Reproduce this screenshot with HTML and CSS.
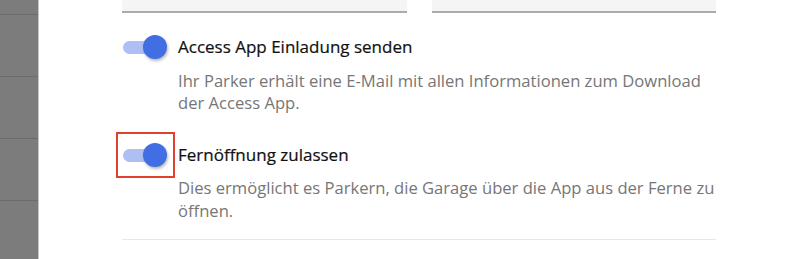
FILE: index.html
```html
<!DOCTYPE html>
<html lang="de">
<head>
<meta charset="utf-8">
<title>Einstellungen</title>
<link rel="stylesheet" href="styles.css">
</head>
<body>
<div class="page">
  <aside class="backdrop">
    <div class="backdrop-row first"></div>
    <div class="backdrop-row"></div>
    <div class="backdrop-row"></div>
    <div class="backdrop-row"></div>
    <div class="backdrop-row"></div>
  </aside>
  <main class="panel">
    <div class="fields">
      <div class="field"></div>
      <div class="field"></div>
    </div>
    <div class="settings">
      <div class="setting">
        <div class="switch on">
          <span class="track"></span>
          <span class="thumb"></span>
        </div>
        <div class="setting-text">
          <div class="setting-title">Access App Einladung senden</div>
          <p class="setting-desc">Ihr Parker erhält eine E-Mail mit allen Informationen zum Download der Access App.</p>
        </div>
      </div>
      <div class="setting">
        <div class="switch on">
          <span class="track"></span>
          <span class="thumb"></span>
          <span class="highlight"></span>
        </div>
        <div class="setting-text">
          <div class="setting-title">Fernöffnung zulassen</div>
          <p class="setting-desc">Dies ermöglicht es Parkern, die Garage über die App aus der Ferne zu öffnen.</p>
        </div>
      </div>
    </div>
    <div class="divider"></div>
  </main>
</div>
</body>
</html>
```
FILE: styles.css
```css
html, body {
  margin: 0;
  padding: 0;
  background: #ffffff;
}
body {
  font-family: "Open Sans", "Noto Sans", "Liberation Sans", sans-serif;
  width: 800px;
  height: 259px;
  overflow: hidden;
}
.page {
  display: flex;
  height: 259px;
}
.backdrop {
  width: 38px;
  flex: 0 0 38px;
  background: #7c7c7c;
  border-right: 1px solid #c9c9c9;
  display: flex;
  flex-direction: column;
}
.backdrop-row {
  height: 61px;
  flex: 0 0 61px;
  border-bottom: 1px solid #6b6b6b;
}
.backdrop-row.first {
  height: 14px;
  flex: 0 0 14px;
}
.panel {
  flex: 1;
  padding: 0 84px 0 83px;
  display: flex;
  flex-direction: column;
}
.fields {
  display: grid;
  grid-template-columns: 285px 284px;
  column-gap: 25px;
}
.field {
  height: 11px;
  background: #f5f5f5;
  border-bottom: 2px solid #ababab;
}
.settings {
  display: flex;
  flex-direction: column;
  gap: 28px;
  padding-top: 22px;
}
.setting {
  display: grid;
  grid-template-columns: 44px 1fr;
  column-gap: 11px;
  margin-left: 1px;
}
.switch {
  position: relative;
  width: 44px;
  height: 24px;
}
.track {
  position: absolute;
  left: 0;
  top: 6px;
  width: 36px;
  height: 13px;
  border-radius: 7px;
  background: #adbff3;
}
.thumb {
  position: absolute;
  right: 0;
  top: 0;
  width: 24px;
  height: 24px;
  border-radius: 50%;
  background: #416ee3;
  box-shadow: 1px 2px 3px rgba(0, 0, 0, 0.28);
}
.highlight {
  position: absolute;
  left: -7px;
  top: -11px;
  width: 59px;
  height: 46px;
  box-sizing: border-box;
  border: 2px solid #e2402e;
}
.setting-text {
  margin-right: -4px;
}
.setting-title {
  font-size: 17px;
  line-height: 24px;
  font-weight: 500;
  color: #111111;
  -webkit-text-stroke: 0.2px #111111;
}
.setting-desc {
  margin: 10.5px 0 0;
  font-size: 16.6px;
  line-height: 22.5px;
  color: #767676;
}
.divider {
  margin-top: 17px;
  height: 1px;
  background: #e6e6ec;
}
```
